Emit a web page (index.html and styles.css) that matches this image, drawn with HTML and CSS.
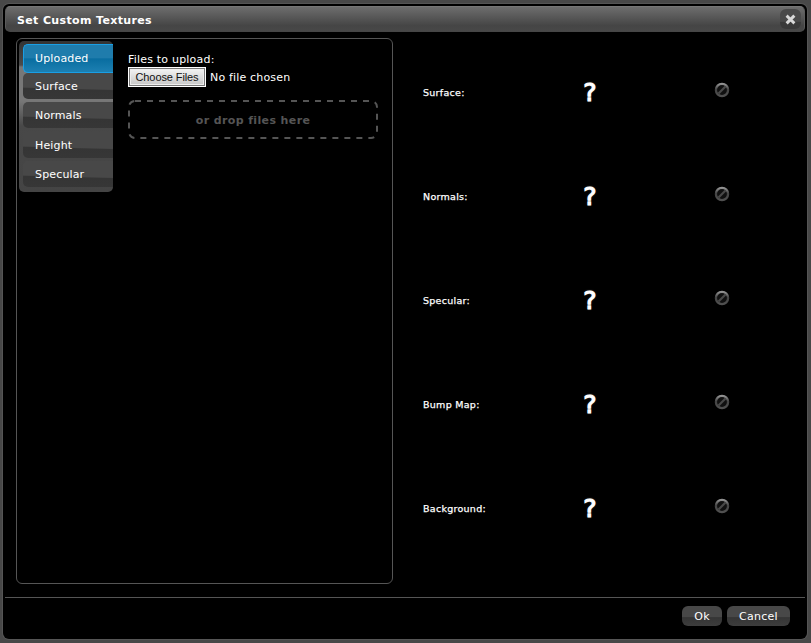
FILE: index.html
```html
<!DOCTYPE html>
<html lang="en">
<head>
<meta charset="utf-8">
<title>Set Custom Textures</title>
<link rel="stylesheet" href="styles.css">
</head>
<body>
<svg class="defs" width="0" height="0" aria-hidden="true">
  <linearGradient id="metal" x1="0" y1="0" x2="0" y2="1"><stop offset="0" stop-color="#929292"/><stop offset=".45" stop-color="#444"/><stop offset="1" stop-color="#505050"/></linearGradient>
  <symbol id="none" viewBox="0 0 16 16"><circle cx="8" cy="8" r="6.1" fill="#101010" stroke="url(#metal)" stroke-width="2.3"/><path d="M4.5 11.5 11.5 4.5" stroke="#484848" stroke-width="2.2"/></symbol>
</svg>
<main class="dialog">
  <header class="titlebar">
    <h1>Set Custom Textures</h1>
    <button class="close" aria-label="Close"><svg width="11" height="11" viewBox="0 0 11 11"><path d="M2.7 2.7 8.3 8.3M8.3 2.7 2.7 8.3" stroke="#d8d8d8" stroke-width="3" stroke-linecap="square"/></svg></button>
  </header>
  <div class="content">
    <section class="sources">
      <nav class="tabs">
        <a class="tab active"><span>Uploaded</span></a>
        <a class="tab"><span>Surface</span></a>
        <a class="tab normals"><span>Normals</span></a>
        <a class="tab height"><span>Height</span></a>
        <a class="tab specular"><span>Specular</span></a>
      </nav>
      <div class="upload">
        <label><span class="t-files">Files to upload:</span></label>
        <div class="picker"><button class="choose">Choose Files</button><span class="t-none">No file chosen</span></div>
        <div class="drop"><svg width="250" height="39"><rect x="1" y="1" width="248" height="37" rx="6" fill="none" stroke="#555" stroke-width="2" stroke-dasharray="6 6"/></svg><span>or drop files here</span></div>
      </div>
    </section>
    <section class="slots">
      <div class="slot"><span class="name">Surface:</span><span class="unknown">?</span><svg class="clear"><use href="#none"/></svg></div>
      <div class="slot"><span class="name">Normals:</span><span class="unknown">?</span><svg class="clear"><use href="#none"/></svg></div>
      <div class="slot"><span class="name">Specular:</span><span class="unknown">?</span><svg class="clear"><use href="#none"/></svg></div>
      <div class="slot"><span class="name">Bump Map:</span><span class="unknown">?</span><svg class="clear"><use href="#none"/></svg></div>
      <div class="slot"><span class="name">Background:</span><span class="unknown">?</span><svg class="clear"><use href="#none"/></svg></div>
    </section>
  </div>
  <footer class="actions"><button class="ok">Ok</button><button class="cancel">Cancel</button></footer>
</main>
</body>
</html>
```
FILE: styles.css
```css
* { box-sizing: border-box; }
body { margin: 0; width: 811px; height: 643px; padding: 4px 4px 4px 3px; overflow: hidden; background: #484848; color: #fff; font: 11px/14px "DejaVu Sans", sans-serif; }
button { margin: 0; padding: 0; border: 0; font: inherit; color: inherit; }
.defs { position: absolute; }
.dialog { display: flex; flex-direction: column; width: 804px; height: 635px; padding: 2px; background: #000; border-radius: 6px; box-shadow: 0 0 0 1px #555; }
.titlebar { display: flex; flex: none; align-items: center; justify-content: space-between; height: 26px; padding: 0 3px 0 12px; border: 1px solid #5c5c5c; border-top-color: #777; border-bottom-color: #464646; border-radius: 5px; background: linear-gradient(#6d6d6d, #454545 78%, #484848); }
h1 { margin: 3px 0 0 -1px; font-size: 11px; line-height: 14px; letter-spacing: .36px; }
.close { display: flex; align-items: center; justify-content: center; width: 21px; height: 20px; border-radius: 6px; background: linear-gradient(#494949 62%, #393939 65%); }
.content { display: flex; flex: none; height: 565px; padding: 6px 0 0 11px; }
.sources { display: flex; align-items: flex-start; width: 377px; height: 546px; border: 1px solid #555; border-radius: 6px; padding: 2px 0 0 2px; }
.tabs { width: 94px; height: 151px; padding: 3px 0 0 4px; border-radius: 5px; background: linear-gradient(#333 0, #4b4b4b 24px, #777 26px, #777 60px, #484848 85px, #444); }
.tab { display: flex; align-items: center; height: 26px; padding-left: 12px; border-radius: 5px 0 0 5px; background: linear-gradient(181.5deg, #484848 58%, #353535 62%, #373737); }
.tab.active { height: 29px; border: 1px solid #199fe5; border-right: 0; padding-left: 11px; background: linear-gradient(#1f7cac 0 48%, #096da0 51%, #1d80b2); }
.tab.normals { margin-top: 3px; }
.tab.height { margin-top: 4px; }
.tab.specular { margin-top: 3px; }
.tab span { padding-top: 2px; letter-spacing: .15px; }
.tab.active span { padding-top: 1px; }
.upload { width: 250px; margin: 11px 0 0 15px; }
label { display: block; height: 15px; padding-top: 1px; letter-spacing: .2px; }
.picker { display: flex; align-items: center; height: 20px; gap: 4px; }
.t-none { padding-top: 2px; letter-spacing: .17px; }
.choose { width: 78px; height: 20px; border: 1px solid #fff; outline: 1px solid #777; outline-offset: -2px; background: linear-gradient(#f6f6f6, #ddd 50%, #c6c6c6); color: #111; font: 11px/18px "Liberation Sans", sans-serif; letter-spacing: -.1px; box-shadow: inset 0 0 0 2px #eee; }
.drop { position: relative; display: flex; align-items: center; justify-content: center; height: 39px; margin-top: 13px; color: #555; font-weight: bold; letter-spacing: .38px; }
.drop span { padding-top: 2px; }
.drop svg { position: absolute; inset: 0; }
.slots { width: 388px; padding-left: 24px; }
.slot { display: grid; grid-template-columns: 155px 136px 24px; align-items: center; height: 104px; padding: 5px 0 0 6px; }
.name { font-size: 9.5px; letter-spacing: .28px; -webkit-text-stroke: .25px #fff; }
.unknown { width: 24px; text-align: center; font: 25px/28px "DejaVu Sans", sans-serif; color: #fff; -webkit-text-stroke: 1.1px #fff; text-shadow: 0 0 2px #999; }
.clear { width: 16px; height: 16px; margin-top: -5px; }
.actions { display: flex; justify-content: flex-end; gap: 5px; height: 40px; padding: 8px 15px 0 0; border-top: 1px solid #555; }
.actions button { height: 20px; padding-top: 1px; border-radius: 6px; background: linear-gradient(#484848 53%, #353535 58%, #3d3d3d); letter-spacing: .25px; }
.actions .ok { width: 40px; }
.actions .cancel { width: 63px; }
```
